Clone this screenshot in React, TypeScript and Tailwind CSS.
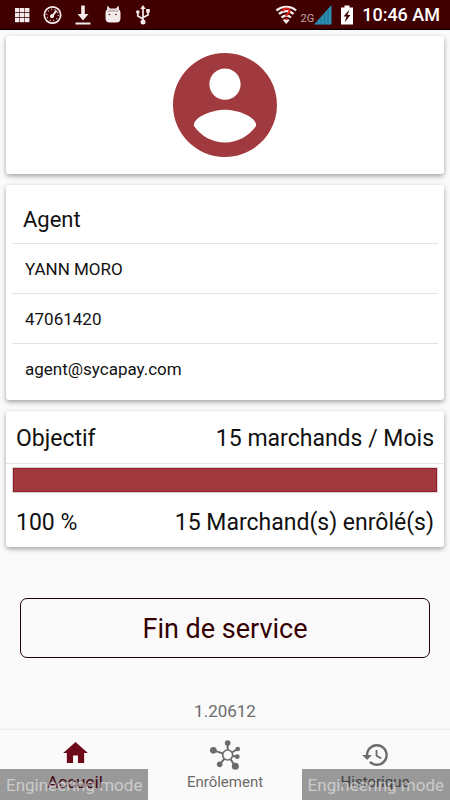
import type { ReactNode } from 'react';

const agentRows = ['YANN MORO', '47061420', 'agent@sycapay.com'];

const objective = {
  target: '15 marchands / Mois',
  percent: 100,
  done: '15 Marchand(s) enrôlé(s)',
};

function StatusBar() {
  return (
    <header className="flex h-[30px] items-center justify-between border-b border-black bg-[#410000] pr-[10px] pl-[14px] text-white">
      <div className="flex items-center">
        <svg className="h-5 w-[18px]" viewBox="0 0 18 20" fill="#f4ecec">
          {[3, 8, 13].map((y) => [1, 6, 11].map((x) => <rect key={`${x}-${y}`} x={x} y={y} width="4.4" height="4.2" />))}
        </svg>
        <svg className="ml-[10px] h-5 w-5" viewBox="0 0 20 20" fill="none" stroke="#f4ecec">
          <circle cx="10.5" cy="10" r="8.2" strokeWidth="1.7" />
          <circle cx="10.5" cy="10" r="5.8" strokeWidth="1.2" strokeDasharray="1 2.6" />
          <path d="M10 11.5 14.5 5.5" strokeWidth="2" />
          <circle cx="10" cy="11.2" r="1.6" fill="#f4ecec" />
        </svg>
        <svg className="ml-3 h-5 w-[18px]" viewBox="0 0 18 20" fill="#f4ecec">
          <path d="M7.2 0.5h3.6v8.5h3.7L9 15.5 3.5 9h3.7z" />
          <path d="M1.5 17.5h15v2h-15z" />
        </svg>
        <svg className="ml-3 h-5 w-[18px]" viewBox="0 0 18 20">
          <path
            d="M3.5 0.5 6 3.5h6L14.5 0.5 15 4.5c1.2 1 1.5 2 1.5 4v4.5c0 3-1.5 4.5-4 4.5h-7c-2.5 0-4-1.5-4-4.5V8.5c0-2 .5-3 1.5-4z"
            fill="#f4ecec"
          />
          <path d="M3.5 4.5h11v2.5h-11z" fill="#cdbcbc" />
          <circle cx="5.5" cy="9.5" r="0.8" fill="#410000" />
          <circle cx="12" cy="9.5" r="0.8" fill="#410000" />
        </svg>
        <svg className="ml-3 h-5 w-[18px]" viewBox="0 0 18 20" fill="none" stroke="#f4ecec" strokeWidth="1.7">
          <path d="M9 3v14M9 14 3.8 11V8M9 12.5 14 10V6" />
          <path d="M9 0 11.7 4H6.3z" fill="#f4ecec" stroke="none" />
          <circle cx="3.8" cy="7" r="1.8" fill="#f4ecec" stroke="none" />
          <path d="M12.2 4h3.6v3.6h-3.6z" fill="#f4ecec" stroke="none" />
          <circle cx="9" cy="17" r="2.5" fill="#f4ecec" stroke="none" />
        </svg>
      </div>

      <div className="flex items-center">
        <svg className="h-5 w-6" viewBox="0 0 24 20" fill="none" stroke="#f4ecec" strokeWidth="2.4">
          <path d="M2.5 5.500C8 .6 17 .6 22 5.5M5 9c4-3.8 10.500-3.8 14.500 0M7.6 12.500c2.7-2.5 6.700-2.5 9.300 0" />
          <path d="M8.8 15 12.2 19l3.5-4c-2-1.5-5-1.5-6.900 0z" fill="#f4ecec" stroke="none" />
          <path d="M9 6.5c0-4 6.5-4 6.5-.5 0 2.5-3.2 2.5-3.2 5.5M12.3 13v2" stroke="#e3221f" strokeWidth="2" />
        </svg>
        <span className="mt-2 ml-[2px] text-[11px] leading-3 text-[#c3a9a9]">2G</span>
        <svg className="h-5 w-[18px]" viewBox="0 0 18 20">
          <path d="M0 19.5 17.5 0v19.5z" fill="#2d8eb4" />
          <path d="M3.5 16v4M7 12v8M10.5 8v12M14 4v16" stroke="#23708f" strokeWidth="1" />
        </svg>
        <svg className="ml-2 h-5 w-[14px]" viewBox="0 0 14 20">
          <path d="M4.5 0.5h5v2h3.5v17H1v-17h3.5z" fill="#fff" />
          <path d="M9.5 4.5 3.5 11.5h3l-2 6 6-7.5h-3z" fill="#410000" />
        </svg>
        <time className="ml-2 pt-px text-[18px] leading-6 font-medium">10:46 AM</time>
      </div>
    </header>
  );
}

function Card({ children }: { children: ReactNode }) {
  return <section className="rounded-[3px] bg-white shadow-[0_2px_5px_rgba(0,0,0,0.36)]">{children}</section>;
}

function ProfileCard() {
  return (
    <Card>
      <div className="flex justify-center py-[17px]">
        <svg className="size-[104px]" viewBox="2 2 20 20" fill="#a03a3f">
          <path d="M12 2C6.48 2 2 6.48 2 12s4.48 10 10 10 10-4.48 10-10S17.52 2 12 2zm0 3c1.66 0 3 1.34 3 3s-1.34 3-3 3-3-1.34-3-3 1.34-3 3-3zm0 14.2c-2.5 0-4.71-1.28-6-3.22.03-1.99 4-3.08 6-3.08 1.99 0 5.97 1.09 6 3.08-1.29 1.94-3.5 3.22-6 3.22z" />
        </svg>
      </div>
    </Card>
  );
}

function AgentCard() {
  return (
    <Card>
      <div className="px-[6px] pt-3 pb-[7px]">
        <h2 className="px-[11px] text-[22px] leading-[46px]">Agent</h2>
        <ul>
          {agentRows.map((row) => (
            <li key={row} className="border-t border-[#e2e2e2] px-[13px] pt-[2px] text-[17px] leading-[47px]">
              {row}
            </li>
          ))}
        </ul>
      </div>
    </Card>
  );
}

function ObjectiveCard() {
  return (
    <Card>
      <div className="flex justify-between border-b border-[#e6e6e6] px-[10px] pt-1 text-[23px] leading-[48px]">
        <h2>Objectif</h2>
        <span>{objective.target}</span>
      </div>
      <div className="px-[6px] pt-[3px]">
        <div className="h-[26px] border border-[#dcd6d6]">
          <div className="h-full border border-[#931c24] bg-[#a03a3f]" style={{ width: `${objective.percent}%` }} />
        </div>
      </div>
      <div className="flex justify-between px-[10px] pt-[6px] text-[23px] leading-[48px]">
        <span>{objective.percent} %</span>
        <span>{objective.done}</span>
      </div>
    </Card>
  );
}

function HomeIcon() {
  return (
    <svg className="h-[21px] w-[25px]" viewBox="2 3 20 17" fill="#6e0919">
      <path d="M10 20v-6h4v6h5v-8h3L12 3 2 12h3v8z" />
    </svg>
  );
}

function HubIcon() {
  return (
    <svg className="size-[30px]" viewBox="0 0 90 90" fill="#6b6b6b" stroke="#6b6b6b" strokeWidth="6">
      <path d="M53 45 10 31M53 45V9M53 45 83 27M53 45 82 50M53 45 76 79M53 45 29 73" />
      <g stroke="none">
        <circle cx="10" cy="31" r="10" />
        <circle cx="53" cy="9" r="8.5" />
        <circle cx="83" cy="27" r="7" />
        <circle cx="82" cy="50" r="7" />
        <circle cx="76" cy="79" r="10.5" />
        <circle cx="29" cy="73" r="8.5" />
      </g>
      <circle cx="53" cy="45" r="15" fill="#fafafa" strokeWidth="5" />
    </svg>
  );
}

function HistoryIcon() {
  return (
    <svg className="h-[22px] w-[26px]" viewBox="1 3 21 18" fill="#6b6b6b">
      <path d="M13 3c-4.97 0-9 4.03-9 9H1l3.89 3.89.07.14L9 12H6c0-3.87 3.13-7 7-7s7 3.13 7 7-3.13 7-7 7c-1.93 0-3.68-.79-4.94-2.06l-1.42 1.42C8.27 19.99 10.51 21 13 21c4.97 0 9-4.03 9-9s-4.03-9-9-9zm-1 5v5l4.28 2.54.72-1.21-3.5-2.08V8H12z" />
    </svg>
  );
}

function BottomNav() {
  return (
    <nav className="grid h-[71px] grid-cols-3 border-t border-[#ececec] text-[15px] leading-5 text-[#6b6b6b] shadow-[0_-1px_2px_rgba(0,0,0,0.05)]">
      <a href="#accueil" className="flex flex-col items-center text-[17px] text-[#6e0919]">
        <span className="flex h-[42px] items-center pt-[2px]">
          <HomeIcon />
        </span>
        Accueil
      </a>
      <a href="#enrolement" className="flex flex-col items-center">
        <span className="flex h-[42px] items-center pt-2">
          <HubIcon />
        </span>
        Enrôlement
      </a>
      <a href="#historique" className="flex flex-col items-center">
        <span className="flex h-[42px] items-center pt-2">
          <HistoryIcon />
        </span>
        Historique
      </a>
    </nav>
  );
}

function EngineeringLabels() {
  const label = 'bg-black/39 px-[6px] pt-[2px] text-[17px] leading-[29px] text-white/50';

  return (
    <div className="pointer-events-none absolute inset-x-0 bottom-0 flex justify-between">
      <span className={label}>Engineering mode</span>
      <span className={label}>Engineering mode</span>
    </div>
  );
}

export default function App() {
  return (
    <div className="relative flex min-h-screen flex-col bg-[#fafafa] font-[Roboto,'Liberation_Sans',sans-serif] text-[#111]">
      <StatusBar />
      <main className="flex flex-1 flex-col">
        <div className="flex flex-col gap-[11px] px-[6px] pt-[6px]">
          <ProfileCard />
          <AgentCard />
          <ObjectiveCard />
        </div>
        <div className="mt-[51px] px-5">
          <button type="button" className="h-[60px] w-full rounded-[7px] border border-[#220000] pt-[2px] text-[27px] text-[#350000]">
            Fin de service
          </button>
        </div>
        <p className="mt-auto pb-[6px] text-center text-[17px] leading-6 text-[#6b6b6b]">1.20612</p>
      </main>
      <BottomNav />
      <EngineeringLabels />
    </div>
  );
}
